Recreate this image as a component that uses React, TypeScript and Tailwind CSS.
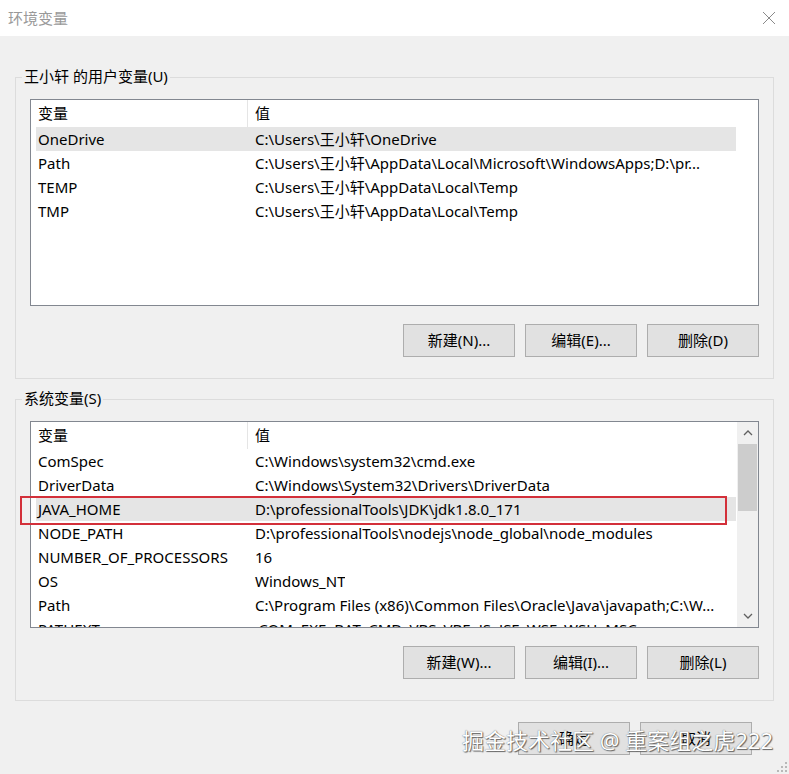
import React from "react";

type Row = { name: string; value: string };

const userVars: Row[] = [
  { name: "OneDrive", value: "C:\\Users\\王小轩\\OneDrive" },
  { name: "Path", value: "C:\\Users\\王小轩\\AppData\\Local\\Microsoft\\WindowsApps;D:\\pr..." },
  { name: "TEMP", value: "C:\\Users\\王小轩\\AppData\\Local\\Temp" },
  { name: "TMP", value: "C:\\Users\\王小轩\\AppData\\Local\\Temp" },
];

const sysVars: Row[] = [
  { name: "ComSpec", value: "C:\\Windows\\system32\\cmd.exe" },
  { name: "DriverData", value: "C:\\Windows\\System32\\Drivers\\DriverData" },
  { name: "JAVA_HOME", value: "D:\\professionalTools\\JDK\\jdk1.8.0_171" },
  { name: "NODE_PATH", value: "D:\\professionalTools\\nodejs\\node_global\\node_modules" },
  { name: "NUMBER_OF_PROCESSORS", value: "16" },
  { name: "OS", value: "Windows_NT" },
  { name: "Path", value: "C:\\Program Files (x86)\\Common Files\\Oracle\\Java\\javapath;C:\\W..." },
  { name: "PATHEXT", value: ".COM;.EXE;.BAT;.CMD;.VBS;.VBE;.JS;.JSE;.WSF;.WSH;.MSC" },
];

function WinButton({ children }: { children: React.ReactNode }) {
  return (
    <button className="w-[112px] h-[33px] bg-[#e1e1e1] border border-[#adadad] text-[15px] text-black flex items-center justify-center">
      {children}
    </button>
  );
}

function VarList({ rows, selected, scroll }: { rows: Row[]; selected: number; scroll?: boolean }) {
  return (
    <div className="relative h-[207px] border border-[#828790] bg-white overflow-hidden flex">
      <div className="flex-1 pl-[5px] pr-[1px]">
        {/* header */}
        <div className="h-[27px] flex items-center">
          <div className="w-[212px] h-full pl-[2px] flex items-center border-r border-[#e5e5e5]">变量</div>
          <div className="pl-[7px]">值</div>
        </div>
        {rows.map((r, i) => (
          <div
            key={r.name + i}
            className={`h-[24px] flex items-center whitespace-nowrap ${i === selected ? "bg-[#e5e5e5]" : ""}`}
          >
            <div className="w-[212px] pl-[2px] shrink-0">{r.name}</div>
            <div className="pl-[7px] overflow-hidden">{r.value}</div>
          </div>
        ))}
      </div>
      {/* scrollbar column */}
      <div className={`w-[21px] shrink-0 flex flex-col items-center ${scroll ? "bg-[#f0f0f0]" : "bg-white"}`}>
        {scroll && (
          <>
            <div className="h-[22px] w-full flex items-center justify-center">
              <svg width="10" height="6" viewBox="0 0 10 6">
                <path d="M1 5 L5 1 L9 5" stroke="#606060" strokeWidth="1.3" fill="none" />
              </svg>
            </div>
            <div className="w-[19px] h-[67px] bg-[#cdcdcd]" />
            <div className="flex-1" />
            <div className="h-[22px] w-full flex items-center justify-center">
              <svg width="10" height="6" viewBox="0 0 10 6">
                <path d="M1 1 L5 5 L9 1" stroke="#606060" strokeWidth="1.3" fill="none" />
              </svg>
            </div>
          </>
        )}
      </div>
    </div>
  );
}

function GroupBox({
  label,
  height,
  children,
}: {
  label: string;
  height: string;
  children: React.ReactNode;
}) {
  return (
    <div className={`relative border border-[#dcdcdc] ${height} px-[14px] pt-[21px]`}>
      <span className="absolute left-[6px] top-[-13px] px-[2px] bg-[#f0f0f0] text-[15px] leading-[22px]">
        {label}
      </span>
      {children}
    </div>
  );
}

export default function App() {
  return (
    <div className="relative w-[789px] h-[774px] bg-[#f0f0f0] overflow-hidden text-[15px] text-black font-['Noto_Sans','Noto_Sans_CJK_SC',sans-serif]">
      {/* title bar */}
      <div className="h-[36px] bg-white flex items-center justify-between pl-[8px] pr-[13px]">
        <span className="text-[15px] text-[#999999]">环境变量</span>
        <svg width="14" height="14" viewBox="0 0 14 14">
          <path d="M1 1 L13 13 M13 1 L1 13" stroke="#8a8a8a" strokeWidth="1" fill="none" />
        </svg>
      </div>

      <div className="px-[15px] pt-[41px]">
        <GroupBox label="王小轩 的用户变量(U)" height="h-[302px]">
          <VarList rows={userVars} selected={0} />
          <div className="flex justify-end gap-[10px] mt-[18px]">
            <WinButton>新建(N)...</WinButton>
            <WinButton>编辑(E)...</WinButton>
            <WinButton>删除(D)</WinButton>
          </div>
        </GroupBox>

        <div className="mt-[20px]">
          <GroupBox label="系统变量(S)" height="h-[302px]">
            <VarList rows={sysVars} selected={2} scroll />
            <div className="flex justify-end gap-[10px] mt-[18px]">
              <WinButton>新建(W)...</WinButton>
              <WinButton>编辑(I)...</WinButton>
              <WinButton>删除(L)</WinButton>
            </div>
          </GroupBox>
        </div>

        <div className="flex justify-end gap-[10px] mt-[21px] pr-[22px]">
          <WinButton>确定</WinButton>
          <WinButton>取消</WinButton>
        </div>
      </div>

      {/* annotation box around JAVA_HOME */}
      <div className="absolute left-[20px] top-[496px] w-[707px] h-[29px] border-2 border-[#d3303a]" />

      {/* watermark */}
      <div className="absolute left-[462px] top-[726px] text-[22px] leading-[28px] text-white whitespace-nowrap [text-shadow:0_0_1px_#555,1px_1px_1px_#666]">
        掘金技术社区 @ 重案组之虎222
      </div>

      {/* resize grip */}
      <svg className="absolute right-[2px] bottom-[2px]" width="10" height="10" viewBox="0 0 10 10">
        <rect x="8" y="0" width="2" height="2" fill="#b8b8b8" />
        <rect x="4" y="4" width="2" height="2" fill="#b8b8b8" />
        <rect x="8" y="4" width="2" height="2" fill="#b8b8b8" />
        <rect x="0" y="8" width="2" height="2" fill="#b8b8b8" />
        <rect x="4" y="8" width="2" height="2" fill="#b8b8b8" />
        <rect x="8" y="8" width="2" height="2" fill="#b8b8b8" />
      </svg>
    </div>
  );
}
